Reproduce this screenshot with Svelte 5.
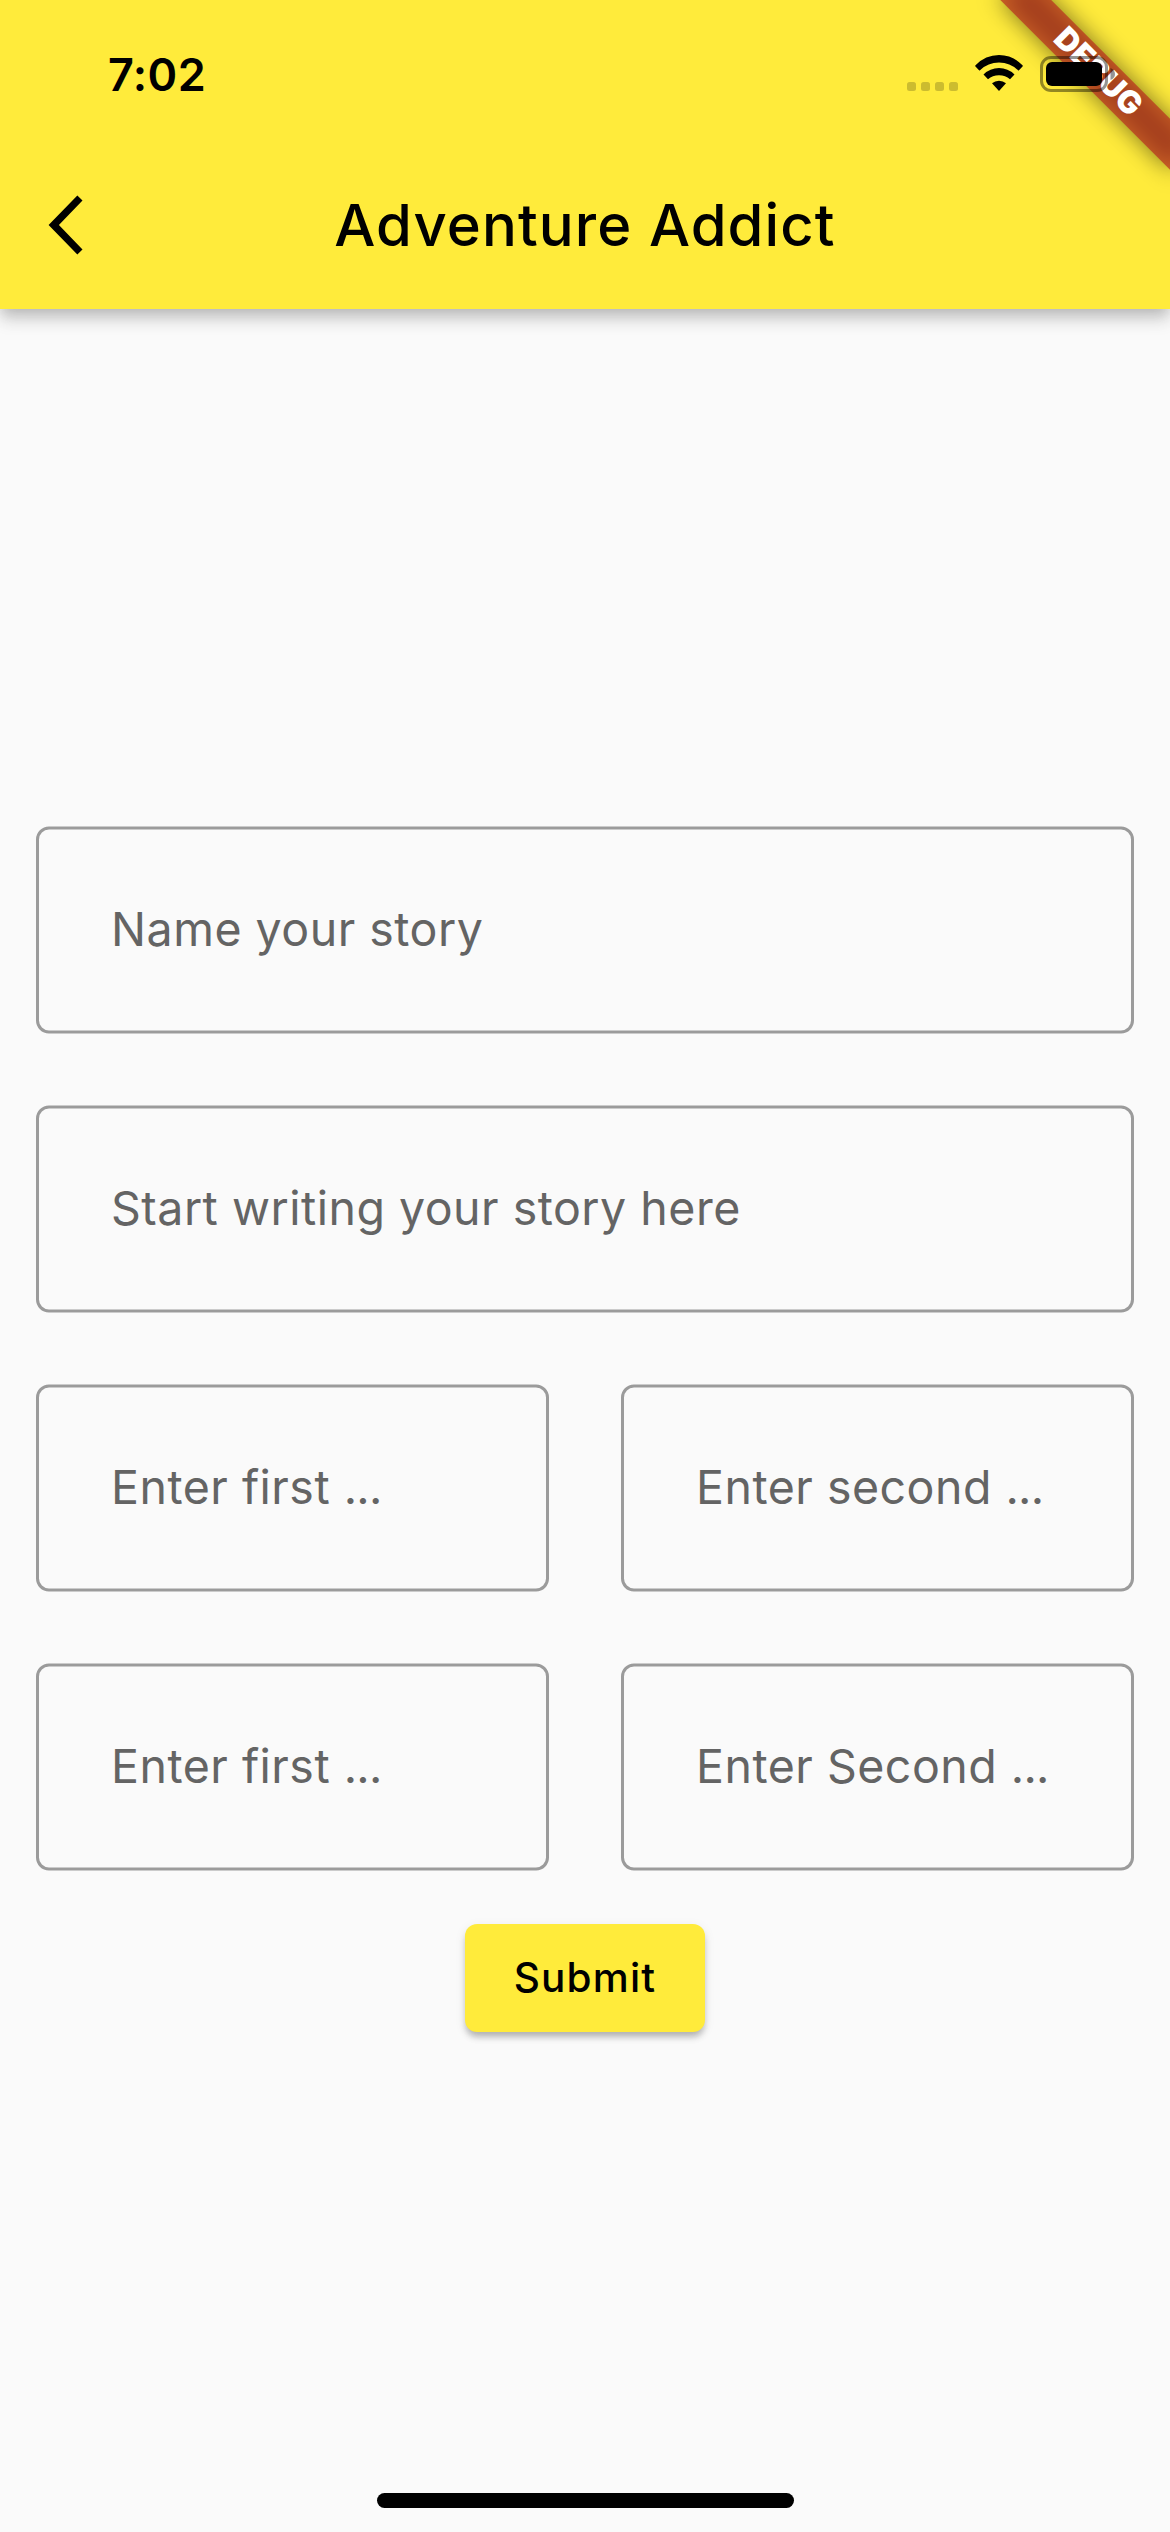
<script lang="ts">
    interface Field {
        name: string
        label: string
        half?: boolean
    }

    const fields: Field[] = [
        { name: 'title', label: 'Name your story' },
        { name: 'body', label: 'Start writing your story here' },
        { name: 'first-choice', label: 'Enter first', half: true },
        { name: 'second-choice', label: 'Enter second', half: true },
        { name: 'first-result', label: 'Enter first', half: true },
        { name: 'second-result', label: 'Enter Second', half: true },
    ]
</script>

<div class="screen">
    <header class="top">
        <div class="status-bar">
            <span class="time">7:02</span>
            <div class="status-icons">
                <svg class="signal" width="51" height="9" viewBox="0 0 51 9">
                    {#each [0, 14, 28, 42] as x}
                        <rect {x} y="0" width="9" height="9" rx="2.5" />
                    {/each}
                </svg>
                <svg class="wifi" width="48" height="36" viewBox="0 0 48 36">
                    <path d="M.5 11.500Q-.2 11 .5 10.200Q10.500 0 24 0T47.500 10.200Q48.200 11 47.500 11.500L44 15.200Q43.500 15.600 43 15.200Q35 7.500 24 7.500T5 15.200Q4.500 15.600 4 15.200Z" />
                    <path d="M8.500 19.500Q15 13 24 13T39.500 19.500L35 24.200Q30.500 20.200 24 20.200T13 24.200Z" />
                    <path d="M17 28.300Q20 25.800 24 25.800T31 28.300L24 36Z" />
                </svg>
                <svg class="battery" width="76" height="36" viewBox="0 0 76 36">
                    <rect class="shell" x="1.500" y="1.500" width="65" height="33" rx="9.500" />
                    <rect x="6" y="6" width="56" height="24" rx="6" />
                    <path class="cap" d="M70.500 12Q75 14 75 18T70.500 24Z" />
                </svg>
            </div>
        </div>
        <div class="app-bar">
            <button class="back" aria-label="Back">
                <svg width="36" height="72" viewBox="0 0 12 24">
                    <path d="M11.500 3.870L9.780 2.200 .2 12l9.580 9.800 1.720-1.670L3.640 12z" />
                </svg>
            </button>
            <h1>Adventure Addict</h1>
        </div>
    </header>

    <div class="banner-clip">
        <div class="banner"><span>DEBUG</span></div>
    </div>

    <main>
        <div class="fields">
            {#each fields as field (field.name)}
                <div class="field" class:half={field.half}>
                    <span class="label">{field.label}{#if field.half}&nbsp;<span class="dots">...</span>{/if}</span>
                </div>
            {/each}
        </div>
        <button class="submit">Submit</button>
    </main>

    <div class="home-indicator"></div>
</div>

<style>
    :global(body) {
        background: #fafafa;
    }

    .screen {
        position: relative;
        display: flex;
        flex-direction: column;
        width: 1170px;
        height: 2532px;
        overflow: hidden;
        background: #fafafa;
        font-family: Inter, 'Liberation Sans', sans-serif;
        color: #000;
    }

    button {
        border: none;
        padding: 0;
        font-family: inherit;
        color: inherit;
    }

    .top {
        height: 309px;
        background: #ffeb3b;
        box-shadow:
            0 6px 12px -3px rgba(0, 0, 0, 0.14),
            0 12px 15px 0 rgba(0, 0, 0, 0.12),
            0 3px 24px 0 rgba(0, 0, 0, 0.07);
    }

    .status-bar {
        display: flex;
        justify-content: space-between;
        height: 141px;
        box-sizing: border-box;
        padding: 55px 54px 0 108px;
    }

    .time {
        font-size: 45px;
        font-weight: 600;
        line-height: 40px;
        letter-spacing: 0.4px;
    }

    .status-icons {
        position: relative;
        z-index: 2;
        display: flex;
        align-items: flex-end;
        height: 36px;
    }

    .signal {
        fill: rgba(0, 0, 0, 0.2);
        margin-right: 17px;
    }

    .wifi {
        margin-right: 17px;
    }

    .battery {
        margin-bottom: -1px;
    }

    .shell {
        fill: none;
        stroke: rgba(0, 0, 0, 0.42);
        stroke-width: 3;
    }

    .cap {
        fill: rgba(0, 0, 0, 0.42);
    }

    .app-bar {
        display: grid;
        grid-template-columns: 168px 1fr 168px;
        align-items: center;
        height: 168px;
    }

    .back {
        display: flex;
        padding-left: 48px;
        background: none;
    }

    h1 {
        margin: 0;
        text-align: center;
        font-size: 58px;
        font-weight: 500;
        letter-spacing: 1.1px;
        line-height: 72px;
    }

    /* Debug ribbon, pinned to the top right corner */
    .banner-clip {
        position: absolute;
        z-index: 1;
        top: 0;
        right: 0;
        width: 300px;
        height: 300px;
        overflow: hidden;
    }

    .banner {
        position: absolute;
        top: 84px;
        right: -120px;
        width: 240px;
        height: 36px;
        box-sizing: border-box;
        padding-bottom: 3px;
        transform-origin: 120px -84px;
        transform: rotate(45deg);
        display: flex;
        align-items: center;
        justify-content: center;
    }

    .banner::before,
    .banner::after {
        content: '';
        position: absolute;
        inset: 0;
    }

    .banner::before {
        background: rgba(0, 0, 0, 0.5);
        filter: blur(11.9px);
    }

    .banner::after {
        background: rgba(183, 28, 28, 0.63);
    }

    .banner span {
        position: relative;
        z-index: 1;
        font-size: 31.5px;
        font-weight: 900;
        line-height: 33px;
        color: #fff;
    }

    main {
        flex: 1;
        display: flex;
        flex-direction: column;
        align-items: center;
        padding: 517px 36px 0;
    }

    .fields {
        display: grid;
        grid-template-columns: 1fr 1fr;
        gap: 72px;
        width: 100%;
        transform: translateY(0.5px);
    }

    .field {
        grid-column: span 2;
        display: flex;
        align-items: center;
        box-sizing: border-box;
        height: 207px;
        padding: 0 72px 4px;
        border: 3px solid #9b9b9b;
        border-radius: 13px;
    }

    .field.half {
        grid-column: span 1;
    }

    .label {
        font-size: 46.5px;
        letter-spacing: 0.5px;
        line-height: 60px;
        color: #646464;
        white-space: nowrap;
    }

    .dots {
        letter-spacing: -0.8px;
    }

    .submit {
        width: 240px;
        height: 108px;
        margin-top: 54px;
        padding-bottom: 2px;
        border-radius: 12px;
        background: #ffeb3b;
        font-size: 40.5px;
        font-weight: 500;
        letter-spacing: 1.2px;
        box-shadow:
            0 6px 6px -3px rgba(0, 0, 0, 0.16),
            0 6px 6px 0 rgba(0, 0, 0, 0.12),
            0 3px 12px 0 rgba(0, 0, 0, 0.08);
    }

    .home-indicator {
        align-self: center;
        width: 417px;
        height: 15px;
        margin-bottom: 24px;
        border-radius: 8px;
        background: #000;
    }
</style>
